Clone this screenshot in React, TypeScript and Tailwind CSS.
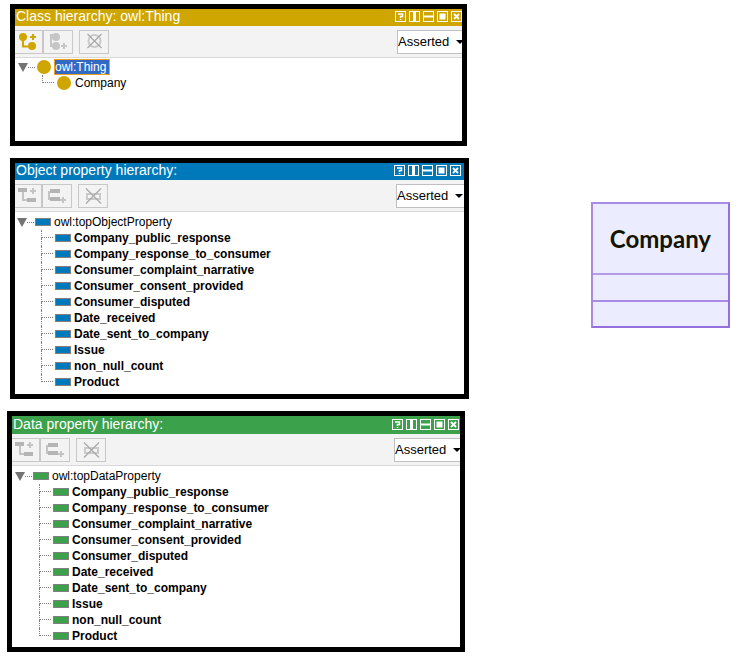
import type { ReactNode } from "react";

type Kind = "class" | "object" | "data";

const theme = {
  class: { bar: "bg-[#cfa500]", heading: "h-[17px]", tree: "pl-[3px] pt-px pb-[50px]", panel: "ml-[3px] mr-[2px]", combo: "w-[65px]", icons: "mr-0", bullet: "h-[14px] w-[14px] rounded-full bg-[#cfa500]" },
  object: { bar: "bg-[#0079ba]", heading: "h-[17px]", tree: "pl-[2px] pt-[2px] pb-[4px]", panel: "ml-[3px]", combo: "w-[68px]", icons: "mr-[3px]", bullet: "h-2 w-4 border border-[#808080] bg-[#0079ba]" },
  data: { bar: "bg-[#3ba14b]", heading: "h-[18px] pt-px", tree: "pl-[3px] pt-[2px] pb-[3px]", panel: "mr-[4px]", combo: "w-[66px]", icons: "mr-px", bullet: "h-2 w-4 border border-[#808080] bg-[#3ba14b]" },
};

const properties = [
  "Company_public_response",
  "Company_response_to_consumer",
  "Consumer_complaint_narrative",
  "Consumer_consent_provided",
  "Consumer_disputed",
  "Date_received",
  "Date_sent_to_company",
  "Issue",
  "non_null_count",
  "Product",
];

const windowIcons: { label: string; shape: ReactNode }[] = [
  { label: "Help", shape: <path d="M3 3h4.500v2.500h-2v1.500M5.500 8v1" strokeWidth="1.500" /> },
  { label: "Split vertically", shape: <path d="M5.500 1v9" strokeWidth="3" /> },
  { label: "Split horizontally", shape: <path d="M1 5.500h9" strokeWidth="2" /> },
  { label: "Float", shape: <path d="M2.500 5.500h6" strokeWidth="6" /> },
  { label: "Close", shape: <path d="M3 3l5 5M8 3l-5 5" strokeWidth="1.800" /> },
];

function AddChildIcon({ kind }: { kind: Kind }) {
  if (kind === "class") {
    return (
      <svg width="27" height="22" fill="none" stroke="#cfa500" strokeWidth="2">
        <path d="M8 7v8.500h5M15 6h6M18 3v6" />
        <circle cx="8" cy="6" r="4" fill="#cfa500" stroke="none" />
        <circle cx="17" cy="15" r="4" fill="#cfa500" stroke="none" />
      </svg>
    );
  }
  return (
    <svg width="27" height="22" fill="none" stroke="#c4c4c4" strokeWidth="2">
      <path d="M8 6v9h5M15 6h6M18 3v6" />
      <path d="M3 5h9M12 15h9" stroke="#b4b4b4" strokeWidth="4" />
    </svg>
  );
}

function AddSiblingIcon({ kind }: { kind: Kind }) {
  if (kind === "class") {
    return (
      <svg width="28" height="22" fill="none" stroke="#c6c6c6" strokeWidth="2">
        <path d="M11 4H7v11h4M17 15h6M20 12v6" />
        <circle cx="12" cy="6" r="4" fill="#c6c6c6" stroke="none" />
        <circle cx="12" cy="15" r="4" fill="#c6c6c6" stroke="none" />
      </svg>
    );
  }
  return (
    <svg width="28" height="22" fill="none" stroke="#c4c4c4" strokeWidth="2">
      <path d="M8 7H6v7h2M17 15h6M20 12v6" />
      <path d="M7 6h10M7 14h10" stroke="#b4b4b4" strokeWidth="4" />
    </svg>
  );
}

function DeleteIcon({ kind }: { kind: Kind }) {
  return (
    <svg width="28" height="22" fill="none" stroke="#cacaca" strokeWidth="2">
      {kind === "class" ? <circle cx="14.500" cy="10" r="6" /> : <rect x="8" y="9" width="13" height="5" />}
      {kind === "class" ? (
        <path d="M7.500 3l14 14M21.500 3l-14 14" stroke="#a8a8a8" strokeWidth="1.200" />
      ) : (
        <path d="M7 3.500l15 15M22 3.500l-15 15" stroke="#a8a8a8" strokeWidth="1.200" />
      )}
    </svg>
  );
}

function Toolbar({ kind }: { kind: Kind }) {
  const first = kind === "object" ? "w-[27px]" : "w-7";
  const button = "h-6 border border-[#c8c8c8] overflow-hidden";
  return (
    <div className="flex h-8 items-center border-b border-[#d8d8d8] bg-[#f3f3f3]">
      <button aria-label="Add child" className={`${button} ${first} border-l-0`}><AddChildIcon kind={kind} /></button>
      <button aria-label="Add sibling" className={`${button} w-[30px]`}><AddSiblingIcon kind={kind} /></button>
      <button aria-label="Delete" className={`${button} ml-[6px] w-[30px]`}><DeleteIcon kind={kind} /></button>
      <div className={`relative ml-auto h-6 overflow-hidden ${theme[kind].combo}`}>
        <select aria-label="Hierarchy mode" className="block h-6 w-[72px] appearance-none border border-[#c0c0c0] bg-white text-[13px] leading-5 text-black">
          <option>Asserted</option>
          <option>Inferred</option>
        </select>
        <svg className="pointer-events-none absolute top-[10px] left-[59px]" width="8" height="4"><path d="M0 0h8L4 4z" /></svg>
      </div>
    </div>
  );
}

function Bullet({ kind }: { kind: Kind }) {
  return (
    <span className="flex w-4 shrink-0 justify-center">
      <span className={theme[kind].bullet} />
    </span>
  );
}

function Panel({ kind, title, root, items }: { kind: Kind; title: string; root: string; items: string[] }) {
  const t = theme[kind];
  const selected = kind === "class";
  return (
    <section className={`border-[5px] border-black bg-white ${t.panel}`}>
      <header className={`flex items-start justify-between pl-px text-white ${t.bar} ${t.heading}`}>
        <h2 className="text-[14px] leading-[14px]">{title}</h2>
        <div className={`flex gap-[3px] pt-[2px] ${t.icons}`}>
          {windowIcons.map((w) => (
            <button key={w.label} aria-label={w.label}>
              <svg className="block" width="11" height="11" fill="none" stroke="white">
                <rect x="0.500" y="0.500" width="10" height="10" />
                {w.shape}
              </svg>
            </button>
          ))}
        </div>
      </header>
      <Toolbar kind={kind} />
      <div className={`text-[12px] leading-4 text-black ${t.tree}`}>
        <div className="flex h-4 items-center">
          <button aria-label={`Collapse ${root}`}>
            <svg width="10" height="10"><path d="M0 1h10L5 10z" fill="#747474" /></svg>
          </button>
          <span className="mr-px w-[7px] border-t border-dotted border-[#808080]" />
          <Bullet kind={kind} />
          {selected ? (
            <span className="ml-[2px] border border-[#f0a020] bg-[#316ac5] pr-[3px] leading-[14px] text-white">{root}</span>
          ) : (
            <span className="ml-[3px]">{root}</span>
          )}
        </div>
        <ul className="ml-6">
          {items.map((item, i) => (
            <li key={item} className="flex h-4 items-center">
              <span className="mr-[2px] flex w-3 flex-col">
                <span className="h-2 border-b border-l border-dotted border-[#808080]" />
                <span className={`h-2 border-dotted border-[#808080] ${i < items.length - 1 ? "border-l" : ""}`} />
              </span>
              <Bullet kind={kind} />
              <span className={`ml-[3px] ${selected ? "" : "font-bold"}`}>{item}</span>
            </li>
          ))}
        </ul>
      </div>
    </section>
  );
}

export default function App() {
  return (
    <main className="flex min-h-screen items-start justify-between gap-6 bg-white pt-1 pr-[19px] pl-[7px] font-['Liberation_Sans',Arial,sans-serif]">
      <div className="flex max-w-[462px] flex-1 flex-col gap-3">
        <Panel kind="class" title="Class hierarchy: owl:Thing" root="owl:Thing" items={["Company"]} />
        <Panel kind="object" title="Object property hierarchy:" root="owl:topObjectProperty" items={properties} />
        <Panel kind="data" title="Data property hierarchy:" root="owl:topDataProperty" items={properties} />
      </div>
      <article className="mt-[198px] border-2 border-t-[#a98be5] border-r-[#9370db] border-b-[#9370db] border-l-[#a98be5] bg-[#ececff]">
        <h2 className="px-[17px] pt-[19px] pb-[18px] text-center font-['Lato',sans-serif] text-[24px] leading-8 font-bold text-[#131300]">Company</h2>
        <div className="h-[27px] border-t-2 border-[#b49be8]" />
        <div className="h-[26px] border-t-2 border-[#a98be5]" />
      </article>
    </main>
  );
}
